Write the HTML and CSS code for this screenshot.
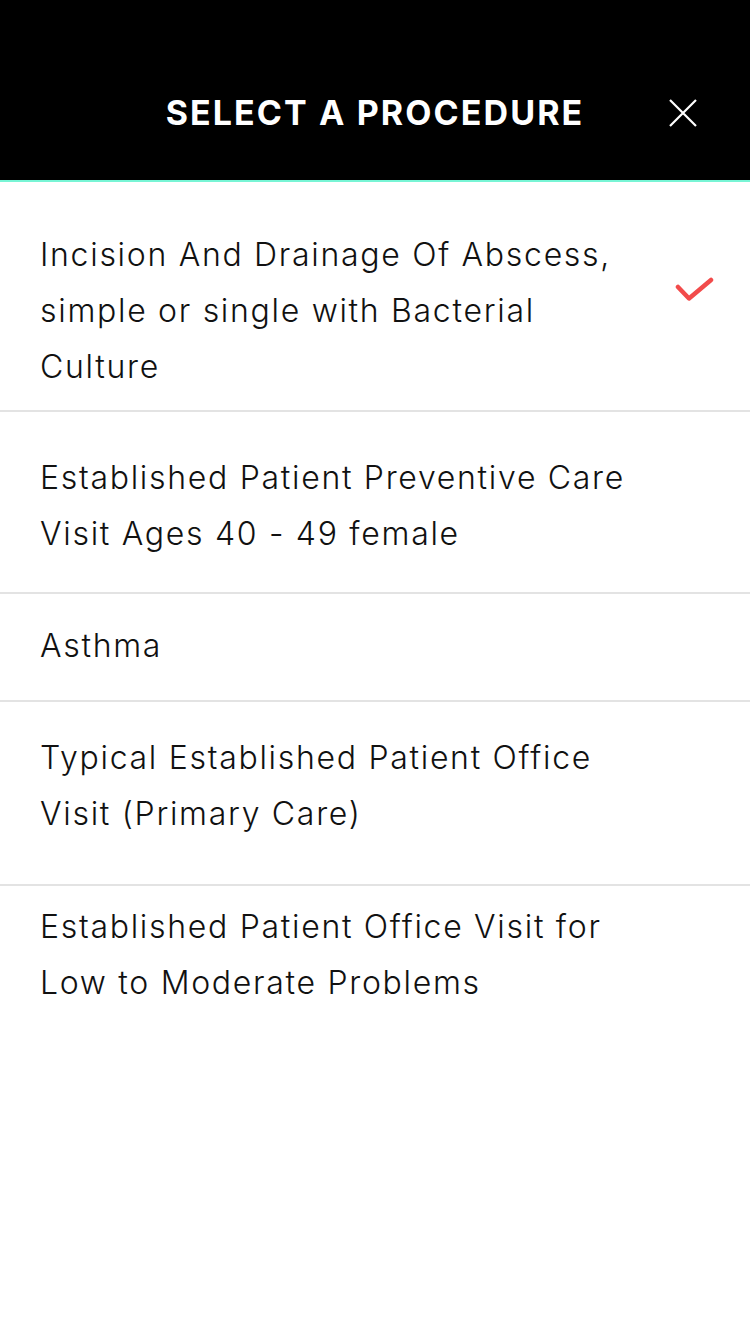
FILE: index.html
```html
<!DOCTYPE html>
<html lang="en">
<head>
<meta charset="utf-8">
<title>Select a Procedure</title>
<link rel="stylesheet" href="styles.css">
</head>
<body>
<header class="topbar">
  <div class="topbar-spacer"></div>
  <h1 class="topbar-title">SELECT A PROCEDURE</h1>
  <button class="close-btn" aria-label="Close">
    <svg width="28" height="28" viewBox="0 0 28 28"><path d="M1 1 L27 27 M27 1 L1 27" stroke="#fff" stroke-width="2.2" fill="none"/></svg>
  </button>
</header>
<ul class="proc-list">
  <li class="proc-item proc-item--first">
    <span class="proc-text">Incision And Drainage Of Abscess,<br>simple or single with Bacterial<br>Culture</span>
    <svg class="proc-check" width="40" height="26" viewBox="0 0 40 26"><polyline points="4,11 15,22.5 37,4" fill="none" stroke="#f24b4b" stroke-width="4.5" stroke-linecap="round" stroke-linejoin="round"/></svg>
  </li>
  <li class="proc-item proc-item--second">
    <span class="proc-text">Established Patient Preventive Care<br>Visit Ages 40 - 49 female</span>
  </li>
  <li class="proc-item proc-item--third">
    <span class="proc-text">Asthma</span>
  </li>
  <li class="proc-item proc-item--fourth">
    <span class="proc-text">Typical Established Patient Office<br>Visit (Primary Care)</span>
  </li>
  <li class="proc-item proc-item--last">
    <span class="proc-text">Established Patient Office Visit for<br>Low to Moderate Problems</span>
  </li>
</ul>
</body>
</html>
```
FILE: styles.css
```css
* { box-sizing: border-box; }
html, body {
  margin: 0;
  padding: 0;
  background: #fff;
  font-family: Inter, "Liberation Sans", sans-serif;
}
.topbar {
  height: 182px;
  background: #000;
  border-bottom: 2px solid #78f5d5;
  display: grid;
  grid-template-columns: 1fr auto 1fr;
  align-items: center;
  padding-top: 46px;
}
.topbar-title {
  margin: 0;
  color: #fff;
  font-size: 34px;
  font-weight: 700;
  letter-spacing: 2.1px;
  line-height: 40px;
}
.close-btn {
  justify-self: end;
  margin-right: 53px;
  padding: 0;
  border: 0;
  background: none;
  width: 28px;
  height: 28px;
  display: block;
}
.close-btn svg { display: block; }
.proc-list {
  list-style: none;
  margin: 0;
  padding: 0;
}
.proc-item {
  display: flex;
  align-items: flex-start;
  justify-content: space-between;
  padding-left: 40px;
  padding-right: 36px;
  border-bottom: 2px solid #e3e3e3;
  font-size: 32px;
  line-height: 56px;
  font-weight: 300;
  color: #111;
  letter-spacing: 1.7px;
}
.proc-text { display: block; }
.proc-check { display: block; margin-top: 49px; }
.proc-item--first { padding-top: 45px; padding-bottom: 15px; }
.proc-item--second { padding-top: 38px; padding-bottom: 30px; }
.proc-item--third { padding-top: 24px; padding-bottom: 26px; }
.proc-item--fourth { padding-top: 28px; padding-bottom: 42px; }
.proc-item--last { padding-top: 13px; border-bottom: 0; }
```
